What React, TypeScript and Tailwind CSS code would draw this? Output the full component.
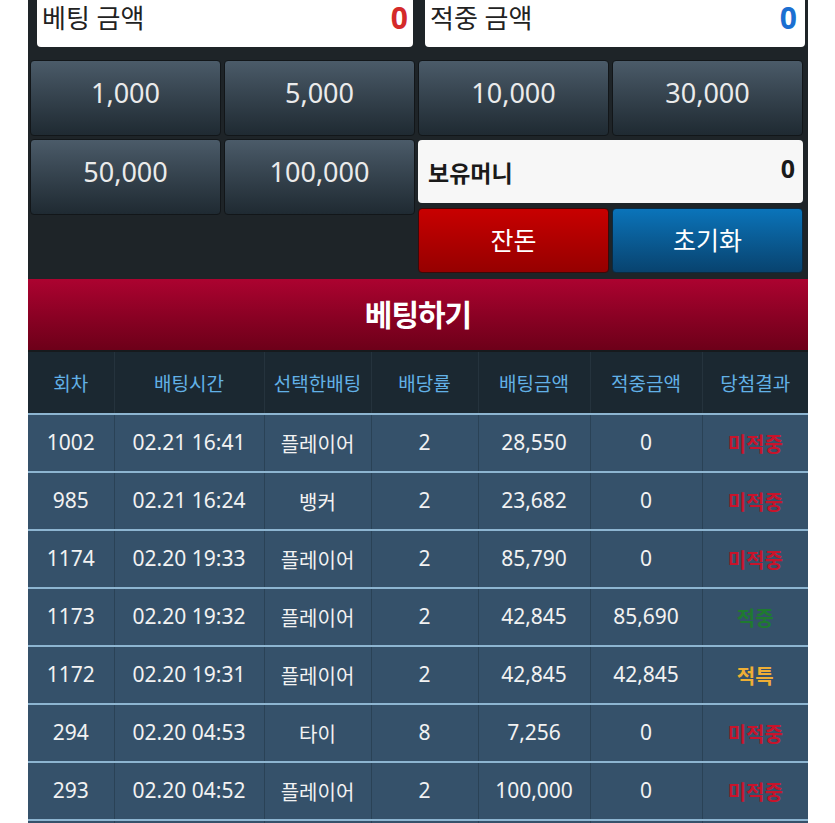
import React from "react";

const font = { fontFamily: '"Noto Sans", "Noto Sans CJK KR", sans-serif' };

type Row = { no: string; time: string; pick: string; odds: string; bet: string; win: string; res: "미적중" | "적중" | "적특" };

const rows: Row[] = [
  { no: "1002", time: "02.21 16:41", pick: "플레이어", odds: "2", bet: "28,550", win: "0", res: "미적중" },
  { no: "985", time: "02.21 16:24", pick: "뱅커", odds: "2", bet: "23,682", win: "0", res: "미적중" },
  { no: "1174", time: "02.20 19:33", pick: "플레이어", odds: "2", bet: "85,790", win: "0", res: "미적중" },
  { no: "1173", time: "02.20 19:32", pick: "플레이어", odds: "2", bet: "42,845", win: "85,690", res: "적중" },
  { no: "1172", time: "02.20 19:31", pick: "플레이어", odds: "2", bet: "42,845", win: "42,845", res: "적특" },
  { no: "294", time: "02.20 04:53", pick: "타이", odds: "8", bet: "7,256", win: "0", res: "미적중" },
  { no: "293", time: "02.20 04:52", pick: "플레이어", odds: "2", bet: "100,000", win: "0", res: "미적중" },
];

function resClass(r: Row["res"]) {
  if (r === "적중") return "text-[#1f7a30] font-bold text-[20px]";
  if (r === "적특") return "text-[#eeae35] font-bold text-[20px]";
  return "text-[#c8142b] font-bold text-[20px]";
}

function ChipButton({ label }: { label: string }) {
  return (
    <button className="h-[76px] rounded-[4px] border border-[#121619] bg-gradient-to-b from-[#4b5b69] to-[#1f2a32] text-[27px] text-[#ebebeb] flex items-center justify-center pb-[9px]">
      {label}
    </button>
  );
}

export default function App() {
  const headers = ["회차", "배팅시간", "선택한배팅", "배당률", "배팅금액", "적중금액", "당첨결과"];
  const widths = ["w-[86px]", "w-[150px]", "w-[107px]", "w-[107px]", "w-[112px]", "w-[112px]", "w-[106px]"];
  return (
    <div className="min-h-screen bg-white" style={font}>
      <div className="ml-[28px] w-[780px] bg-[#1e2428]">
        {/* top amount boxes */}
        <div className="flex pl-[9px] pr-[3px] gap-[12px]">
          <div className="w-[376px] h-[47px] bg-white rounded-b-[4px] flex items-center justify-between pl-[5px] pr-[5px] pb-[12px]">
            <span className="text-[26px] leading-none text-[#222]">베팅 금액</span>
            <span className="text-[30px] leading-none font-bold text-[#d42a2a]">0</span>
          </div>
          <div className="flex-1 h-[47px] bg-white rounded-b-[4px] flex items-center justify-between pl-[5px] pr-[8px] pb-[12px]">
            <span className="text-[26px] leading-none text-[#222]">적중 금액</span>
            <span className="text-[30px] leading-none font-bold text-[#1b6fd1]">0</span>
          </div>
        </div>

        {/* chip row 1 */}
        <div className="pt-[13px] pl-[2px] grid grid-cols-[191px_191px_191px_191px] gap-[3px]">
          <ChipButton label="1,000" />
          <ChipButton label="5,000" />
          <ChipButton label="10,000" />
          <ChipButton label="30,000" />
        </div>

        {/* row 2 */}
        <div className="flex pl-[2px] gap-[3px] mt-[3px]">
          <div className="grid grid-cols-[191px_191px] gap-[3px] w-[385px] self-start">
            <ChipButton label="50,000" />
            <ChipButton label="100,000" />
          </div>
          <div className="flex flex-col w-[385px] gap-[5px]">
            <div className="mt-[1px] h-[63px] rounded-[4px] bg-[#f7f7f7] flex items-center justify-between pl-[10px] pr-[8px]">
              <span className="text-[23px] font-bold text-[#1a1a1a] pt-[4px]">보유머니</span>
              <span className="text-[25px] font-bold text-[#1a1a1a] pb-[6px]">0</span>
            </div>
            <div className="grid grid-cols-[191px_191px] gap-[3px]">
              <button className="h-[65px] rounded-[4px] border border-[#3a0a0a] bg-gradient-to-b from-[#c80000] to-[#960000] text-[25px] text-white flex items-center justify-center">
                잔돈
              </button>
              <button className="h-[65px] rounded-[4px] border border-[#0c2a40] bg-gradient-to-b from-[#0a74ba] to-[#08436f] text-[25px] text-white flex items-center justify-center">
                초기화
              </button>
            </div>
          </div>
        </div>

        {/* bet button */}
        <button className="mt-[6px] w-full h-[71px] bg-gradient-to-b from-[#ac0330] to-[#6d0019] text-white text-[30px] font-bold flex items-center justify-center tracking-[-1px]">
          베팅하기
        </button>
        <div className="h-[2px] bg-[#161a1d]" />

        {/* table */}
        <table className="w-[780px] table-fixed border-collapse">
          <thead>
            <tr className="h-[62px] bg-[#1b2831]">
              {headers.map((h, i) => (
                <th
                  key={h}
                  className={`${widths[i]} font-normal text-[19px] text-[#62b1e6] border-l border-[#25333d] first:border-l-0 text-center pt-[4px]`}
                >
                  {h}
                </th>
              ))}
            </tr>
          </thead>
          <tbody>
            {rows.map((r, idx) => (
              <tr key={idx} className="h-[58px] bg-[#35516a] border-t-2 border-[#8db5d1]">
                <td className="text-center text-[21px] text-[#f2f2f2] border-l border-[#2a4256] first:border-l-0">{r.no}</td>
                <td className="text-center text-[21px] text-[#f2f2f2] border-l border-[#2a4256]">{r.time}</td>
                <td className="text-center text-[20px] text-[#f2f2f2] border-l border-[#2a4256] pt-[4px]">{r.pick}</td>
                <td className="text-center text-[21px] text-[#f2f2f2] border-l border-[#2a4256]">{r.odds}</td>
                <td className="text-center text-[21px] text-[#f2f2f2] border-l border-[#2a4256]">{r.bet}</td>
                <td className="text-center text-[21px] text-[#f2f2f2] border-l border-[#2a4256]">{r.win}</td>
                <td className={`text-center border-l border-[#2a4256] pt-[4px] ${resClass(r.res)}`}>{r.res}</td>
              </tr>
            ))}
            <tr className="h-[58px] bg-[#35516a] border-t-2 border-[#8db5d1]">
              {headers.map((h) => (
                <td key={h} className="border-l border-[#2a4256] first:border-l-0" />
              ))}
            </tr>
          </tbody>
        </table>
      </div>
    </div>
  );
}
